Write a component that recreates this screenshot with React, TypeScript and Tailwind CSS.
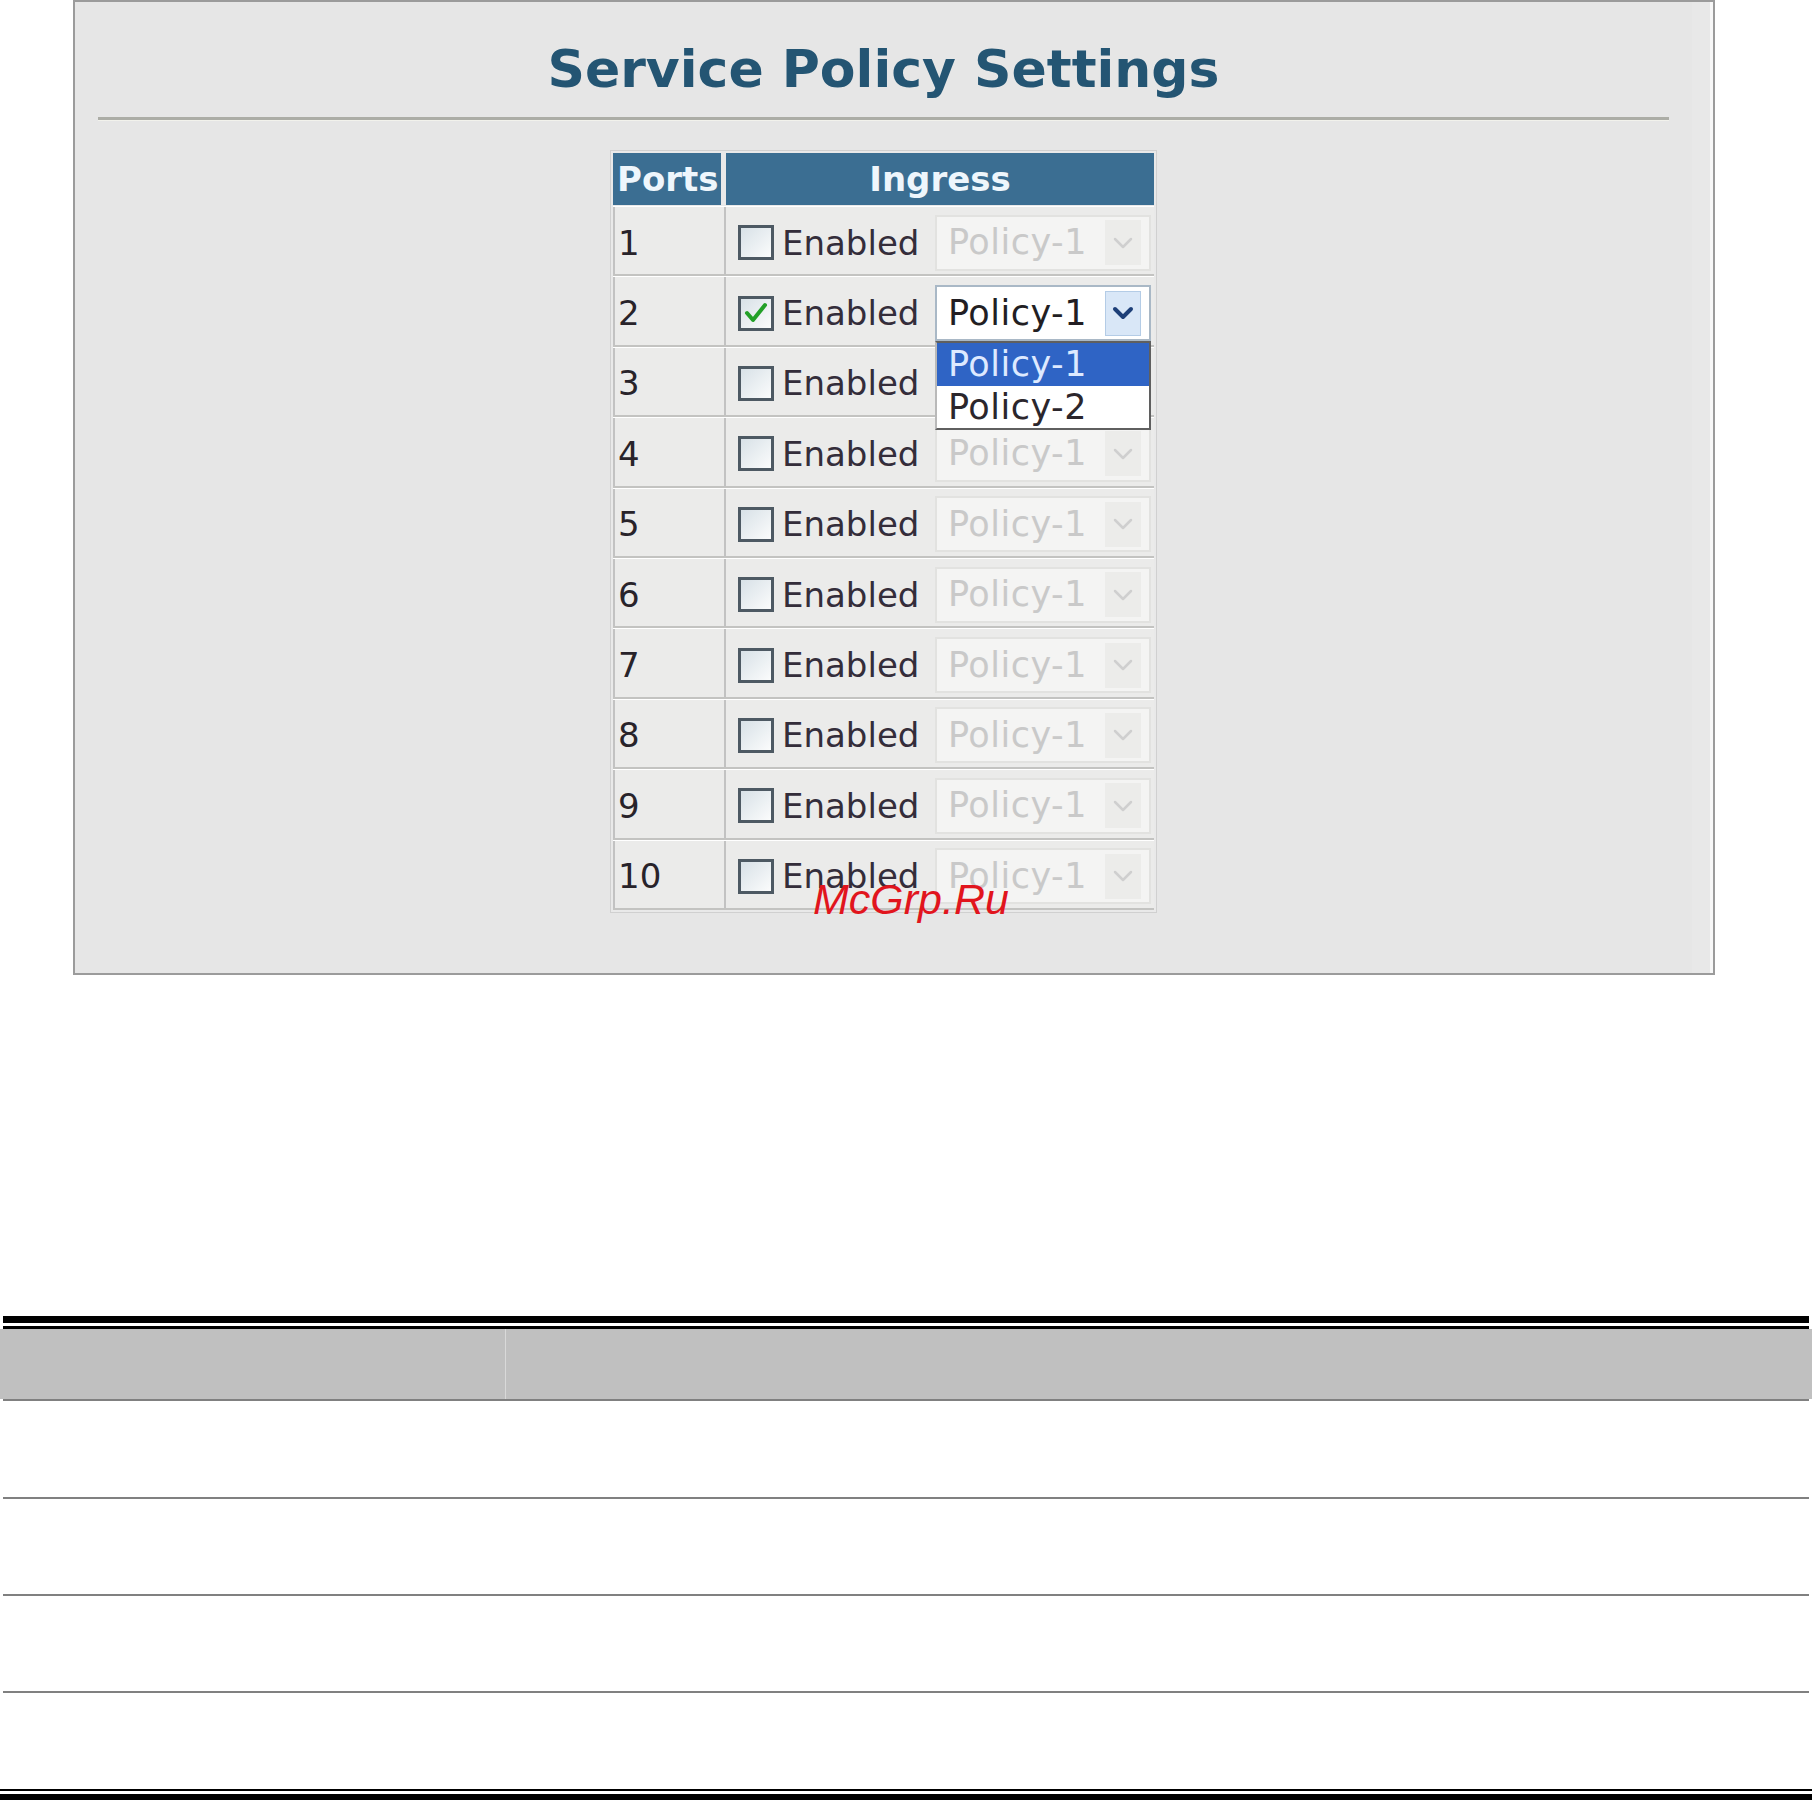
import React from 'react';

const ports = [1, 2, 3, 4, 5, 6, 7, 8, 9, 10];

const Chevron: React.FC<{ active: boolean }> = ({ active }) => (
  <svg width="22" height="14" viewBox="0 0 22 14">
    <polyline
      points="3,3 11,11 19,3"
      fill="none"
      stroke={active ? '#1d3f78' : '#cfcfcf'}
      strokeWidth={active ? 4 : 2.5}
      strokeLinecap="round"
      strokeLinejoin="round"
    />
  </svg>
);

const CheckBox: React.FC<{ checked: boolean }> = ({ checked }) => (
  <div className="w-[36px] h-[35px] shrink-0 border-[3px] border-[#4d5963] bg-linear-to-br from-[#d8e1e7] to-[#fbfcfc] flex items-center justify-center">
    {checked && (
      <svg width="26" height="24" viewBox="0 0 26 24">
        <polyline points="4,12 10,19 22,4" fill="none" stroke="#22a028" strokeWidth="4" strokeLinecap="round" strokeLinejoin="round" />
      </svg>
    )}
  </div>
);

const PolicySelect: React.FC<{ enabled: boolean; open: boolean }> = ({ enabled, open }) => (
  <div
    className={`relative w-[216px] h-[56px] mr-[3px] ml-auto flex items-center border-2 ${
      enabled ? 'bg-white border-[#a9b8c6]' : 'bg-[#f4f4f3] border-[#e2e2e0]'
    }`}
  >
    <span className={`pl-[11px] text-[35px] tracking-[0.5px] leading-none ${enabled ? 'text-[#221e23]' : 'text-[#c9c9c9]'}`}>Policy-1</span>
    <div
      className={`ml-auto mr-[8px] w-[36px] h-[45px] flex items-center justify-center ${
        enabled ? 'bg-[#d9e7f7] border border-[#b4cce6]' : 'bg-[#ececea]'
      }`}
    >
      <Chevron active={enabled} />
    </div>
    {open && (
      <div className="absolute z-10 left-[-2px] right-[-2px] top-[calc(100%+2px)] bg-white border-2 border-[#5f5f5f] border-l-[#b9b9b9]">
        <div className="h-[43px] bg-[#2f64c5] text-[#dde9ff] text-[35px] tracking-[0.5px] leading-none flex items-center pl-[11px]">Policy-1</div>
        <div className="h-[42px] text-[#2b262c] text-[35px] tracking-[0.5px] leading-none flex items-center pl-[11px]">Policy-2</div>
      </div>
    )}
  </div>
);

export default function App() {
  return (
    <div className="relative w-[1812px] h-[1800px] bg-white overflow-hidden font-['DejaVu_Sans',sans-serif]">
      {/* screenshot panel */}
      <div className="ml-[73px] w-[1642px] h-[975px] border-2 border-[#9b9b9b] bg-[#e6e6e6] flex">
        <div className="flex-1 flex flex-col">
          <h1 className="pt-[41px] text-center text-[52px] leading-[52px] font-bold text-[#245573]">
            Service Policy Settings
          </h1>
          <div className="mx-[23px] mt-[22px] h-[3px] bg-[#acada6] shadow-[0_1px_0_#f2f2ec]" />

          <div className="mt-[30px] mx-auto w-[547px] border border-[#d0d0d0] p-[2px] bg-[#e9e9e9]">
            <div className="flex gap-[5px] h-[52px] text-[34px] font-bold text-[#eef6fc] leading-none mb-[1px]">
              <div className="w-[108px] bg-[#3b6e92] flex items-center pl-[4px]">Ports</div>
              <div className="flex-1 bg-[#3b6e92] flex items-center justify-center">Ingress</div>
            </div>
            {ports.map((p) => (
              <div
                key={p}
                className="grid grid-cols-[111px_1fr] h-[70.4px] border-b-2 border-[#c3c3c1] border-t border-t-white bg-[#ebebea]"
              >
                <div className="border-l-2 border-[#c2c2c2] flex items-center pl-[3px] pt-[4px] text-[34px] leading-none text-[#28232a]">
                  {p}
                </div>
                <div className="border-l-2 border-[#c2c2c2] flex items-center pl-[12px] pt-[4px]">
                  <CheckBox checked={p === 2} />
                  <span className="ml-[8px] text-[34px] leading-none text-[#342d3a]">Enabled</span>
                  <PolicySelect enabled={p === 2} open={p === 2} />
                </div>
              </div>
            ))}
          </div>
        </div>
        <div className="w-[21px] bg-[#e8e8e8] border-r-[3px] border-[#f7f7f7]" />
      </div>

      {/* watermark */}
      <div className="absolute left-[813px] top-[878px] text-[43px] leading-none italic text-[#e1151d] font-['Liberation_Sans',sans-serif]">
        McGrp.Ru
      </div>

      {/* lower table */}
      <div className="mt-[341px]">
        <div className="mx-[3px] h-[7px] bg-black" />
        <div className="mx-[3px] mt-[3px] h-[3px] bg-black" />
        <div className="flex h-[70px] bg-[#c0c0c0]">
          <div className="w-[506px] border-r border-[#d9d9d9]" />
          <div className="flex-1" />
        </div>
        <div className="mx-[3px] h-[2px] bg-[#808080]" />
        <div className="h-[96px]" />
        <div className="mx-[3px] h-[2px] bg-[#808080]" />
        <div className="h-[95px]" />
        <div className="mx-[3px] h-[2px] bg-[#808080]" />
        <div className="h-[95px]" />
        <div className="mx-[3px] h-[2px] bg-[#808080]" />
        <div className="h-[96px]" />
        <div className="h-[2px] bg-black" />
        <div className="mt-[3px] h-[6px] bg-black" />
      </div>
    </div>
  );
}
